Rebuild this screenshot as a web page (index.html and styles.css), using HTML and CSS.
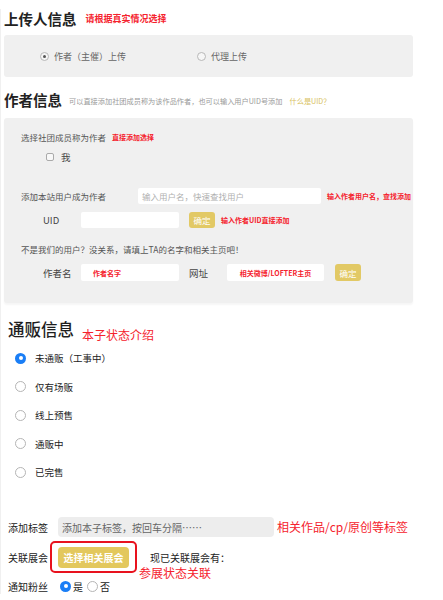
FILE: index.html
```html
<!DOCTYPE html>
<html lang="zh">
<head>
<meta charset="utf-8">
<link rel="stylesheet" href="styles.css">
</head>
<body>
<div class="page">
  <div class="head head1">
    <span class="title">上传人信息</span>
    <span class="note-bold">请根据真实情况选择</span>
  </div>
  <div class="panel panel1">
    <label class="opt opt1"><span class="oradio on"></span>作者（主催）上传</label>
    <label class="opt"><span class="oradio"></span>代理上传</label>
  </div>

  <div class="head head2">
    <span class="title t2">作者信息</span>
    <span class="desc">可以直接添加社团成员称为该作品作者，也可以输入用户UID号添加</span>
    <span class="what">什么是UID？</span>
  </div>
  <div class="panel panel2">
    <div class="row ra"><span class="lbl">选择社团成员称为作者</span><span class="rednote">直接添加选择</span></div>
    <div class="row rcheck"><span class="cbox"></span><span class="me">我</span></div>
    <div class="row rb"><span class="lbl wb">添加本站用户成为作者</span><span class="inp ib ph">输入用户名，快速查找用户</span><span class="rednote">输入作者用户名，查找添加</span></div>
    <div class="row ruid"><span class="lbl ws">UID</span><span class="inp is"></span><span class="btn">确定</span><span class="rednote">输入作者UID直接添加</span></div>
    <div class="row rc"><span class="lbl">不是我们的用户？没关系，请填上TA的名字和相关主页吧！</span></div>
    <div class="row rauth"><span class="lbl ws">作者名</span><span class="inp is redin">作者名字</span><span class="lbl ws">网址</span><span class="inp iu redin ctr">相关微博/LOFTER主页</span><span class="btn b2">确定</span></div>
  </div>

  <div class="sec3">
    <div class="head3">
      <span class="title3">通贩信息</span>
      <span class="note-big">本子状态介绍</span>
    </div>
    <ul class="radios">
      <li><span class="mradio on"></span>未通贩（工事中）</li>
      <li><span class="mradio"></span>仅有场贩</li>
      <li><span class="mradio"></span>线上预售</li>
      <li><span class="mradio"></span>通贩中</li>
      <li><span class="mradio"></span>已完售</li>
    </ul>
    <div class="frow tags">
      <span class="flbl">添加标签</span>
      <span class="taginp">添加本子标签，按回车分隔……</span>
      <span class="note-big">相关作品/cp/原创等标签</span>
    </div>
    <div class="frow expo">
      <span class="flbl">关联展会</span>
      <span class="redbox"><span class="gbtn">选择相关展会</span></span>
      <span class="linked">现已关联展会有：</span>
      <span class="note-big expo-note">参展状态关联</span>
    </div>
    <div class="frow notify">
      <span class="flbl">通知粉丝</span>
      <span class="mradio on"></span><span class="yn">是</span>
      <span class="mradio"></span><span class="yn">否</span>
    </div>
  </div>
</div>
</body>
</html>
```

FILE: styles.css
```css
html, body {
  margin: 0;
  padding: 0;
  background: #fff;
}
body {
  font-family: "Noto Sans CJK SC", "Noto Sans", sans-serif;
  color: #333;
  width: 443px;
  height: 600px;
  overflow: hidden;
}
.page {
  padding-left: 3px;
  border-left: 1px solid #f0f0f0;
  width: 439px;
}
.head {
  display: flex;
  align-items: center;
  white-space: nowrap;
}
.head1 {
  margin-top: 9px;
  height: 20px;
}
.title {
  font-size: 14.5px;
  font-weight: bold;
  color: #222;
  line-height: 20px;
}
.note-bold {
  margin-left: 9px;
  color: #f5222d;
  font-size: 9px;
  font-weight: bold;
  line-height: 12px;
}
.panel {
  background: #f0f0f0;
  border-radius: 3px;
  width: 409px;
  box-sizing: border-box;
}
.panel1 {
  margin-top: 6px;
  height: 42px;
  display: flex;
  align-items: center;
  padding-left: 36px;
}
.opt {
  display: flex;
  align-items: center;
  font-size: 9px;
  color: #666;
}
.opt1 {
  width: 157px;
}
.oradio {
  width: 7px;
  height: 7px;
  border-radius: 50%;
  border: 1px solid #b8b8b8;
  background: #f6f6f6;
  margin-right: 5px;
  position: relative;
  box-sizing: content-box;
}
.oradio.on::after {
  content: "";
  position: absolute;
  left: 2px;
  top: 2px;
  width: 3px;
  height: 3px;
  border-radius: 50%;
  background: #555;
}
.head2 {
  margin-top: 13px;
  height: 20px;
}
.desc {
  margin-left: 7px;
  font-size: 7.2px;
  color: #9a9a9a;
  margin-top: 2px;
}
.what {
  margin-left: 7px;
  font-size: 7.2px;
  color: #d8bf5e;
  margin-top: 2px;
}
.panel2 {
  margin-top: 8px;
  height: 185px;
  padding-left: 17px;
  padding-top: 12px;
  overflow: hidden;
  box-shadow: 0 2px 2px rgba(0,0,0,0.04);
}
.row {
  display: flex;
  align-items: center;
  white-space: nowrap;
  font-size: 8.5px;
  color: #555;
}
.ra { height: 14px; }
.rcheck {
  margin-top: 6px;
  height: 14px;
  padding-left: 25px;
}
.cbox {
  width: 6px;
  height: 6px;
  border: 1px solid #aaa;
  border-radius: 2px;
  background: #f8f8f8;
}
.me {
  margin-left: 7px;
  font-size: 9.5px;
  color: #444;
}
.rb {
  margin-top: 24px;
  height: 16px;
}
.wb { width: 117px; }
.rednote {
  color: #f5222d;
  font-size: 7px;
  font-weight: bold;
  margin-left: 6px;
}
.inp {
  background: #fff;
  border-radius: 2px;
  height: 16px;
  display: flex;
  align-items: center;
  box-sizing: border-box;
  font-size: 8.5px;
}
.ph {
  color: #b0b0b0;
  padding-left: 4px;
}
.ib { width: 183px; }
.ruid {
  margin-top: 8px;
  height: 16px;
  padding-left: 22px;
}
.ws {
  width: 38px;
  font-size: 9.5px;
  color: #444;
}
.is { width: 98px; }
.btn {
  margin-left: 10px;
  width: 26px;
  height: 16px;
  border-radius: 3px;
  background: #e2c965;
  color: #fff;
  font-size: 8.5px;
  display: flex;
  align-items: center;
  justify-content: center;
}
.rc {
  margin-top: 14px;
  height: 14px;
}
.rauth {
  margin-top: 8px;
  height: 17px;
  padding-left: 22px;
}
.rauth .ws + .inp + .ws {
  margin-left: 10px;
}
.redin {
  height: 17px;
  color: #f5222d;
  font-size: 7px;
  font-weight: bold;
  padding-left: 12px;
}
.iu {
  width: 97px;
  justify-content: center;
  padding-left: 0;
}
.b2 {
  margin-left: 11px;
  height: 17px;
}
.sec3 {
  padding-left: 4px;
}
.head3 {
  margin-top: 15px;
  height: 24px;
  display: flex;
  align-items: flex-end;
}
.title3 {
  font-size: 16.5px;
  color: #1e1e1e;
  line-height: 22px;
  align-self: flex-start;
  font-weight: 500;
}
.note-big {
  color: #f5222d;
  font-size: 12px;
  line-height: 14px;
  white-space: nowrap;
}
.head3 .note-big {
  margin-left: 8px;
}
.radios {
  list-style: none;
  margin: 2px 0 0 0;
  padding: 0 0 0 7px;
}
.radios li {
  height: 28.5px;
  display: flex;
  align-items: center;
  font-size: 9.5px;
  color: #222;
}
.mradio {
  width: 11px;
  height: 11px;
  border-radius: 50%;
  border: 1px solid #b5b5b5;
  background: #fff;
  box-sizing: border-box;
  margin-right: 9px;
  position: relative;
  flex: none;
}
.mradio.on {
  border: none;
  background: #1a7ef6;
}
.mradio.on::after {
  content: "";
  position: absolute;
  left: 3.5px;
  top: 3.5px;
  width: 4px;
  height: 4px;
  border-radius: 50%;
  background: #fff;
}
.frow {
  display: flex;
  align-items: center;
  white-space: nowrap;
}
.flbl {
  font-size: 10px;
  color: #222;
  width: 50px;
}
.tags {
  margin-top: 30.5px;
  height: 20px;
}
.taginp {
  width: 216px;
  height: 20px;
  background: #ededed;
  border-radius: 4px;
  font-size: 10px;
  color: #666;
  display: flex;
  align-items: center;
  padding-left: 4px;
  box-sizing: border-box;
}
.tags .note-big {
  margin-left: 3px;
}
.expo {
  margin-top: 4px;
  height: 32px;
  position: relative;
}
.expo .flbl {
  width: 42px;
}
.redbox {
  width: 87px;
  height: 32px;
  border: 2px solid #e8121e;
  border-radius: 5px;
  box-sizing: border-box;
  display: flex;
  align-items: center;
  justify-content: center;
}
.gbtn {
  width: 71px;
  height: 21px;
  border-radius: 4px;
  background: #e3c85d;
  color: #fff;
  font-size: 10px;
  font-weight: bold;
  display: flex;
  align-items: center;
  justify-content: center;
}
.linked {
  margin-left: 13px;
  font-size: 10px;
  color: #222;
}
.expo-note {
  position: absolute;
  left: 131px;
  top: 25px;
}
.notify {
  margin-top: 5px;
  height: 16px;
}
.notify .flbl {
  width: 52px;
}
.notify .mradio {
  margin-right: 2px;
}
.yn {
  font-size: 10px;
  color: #222;
  margin-right: 4px;
}
```
